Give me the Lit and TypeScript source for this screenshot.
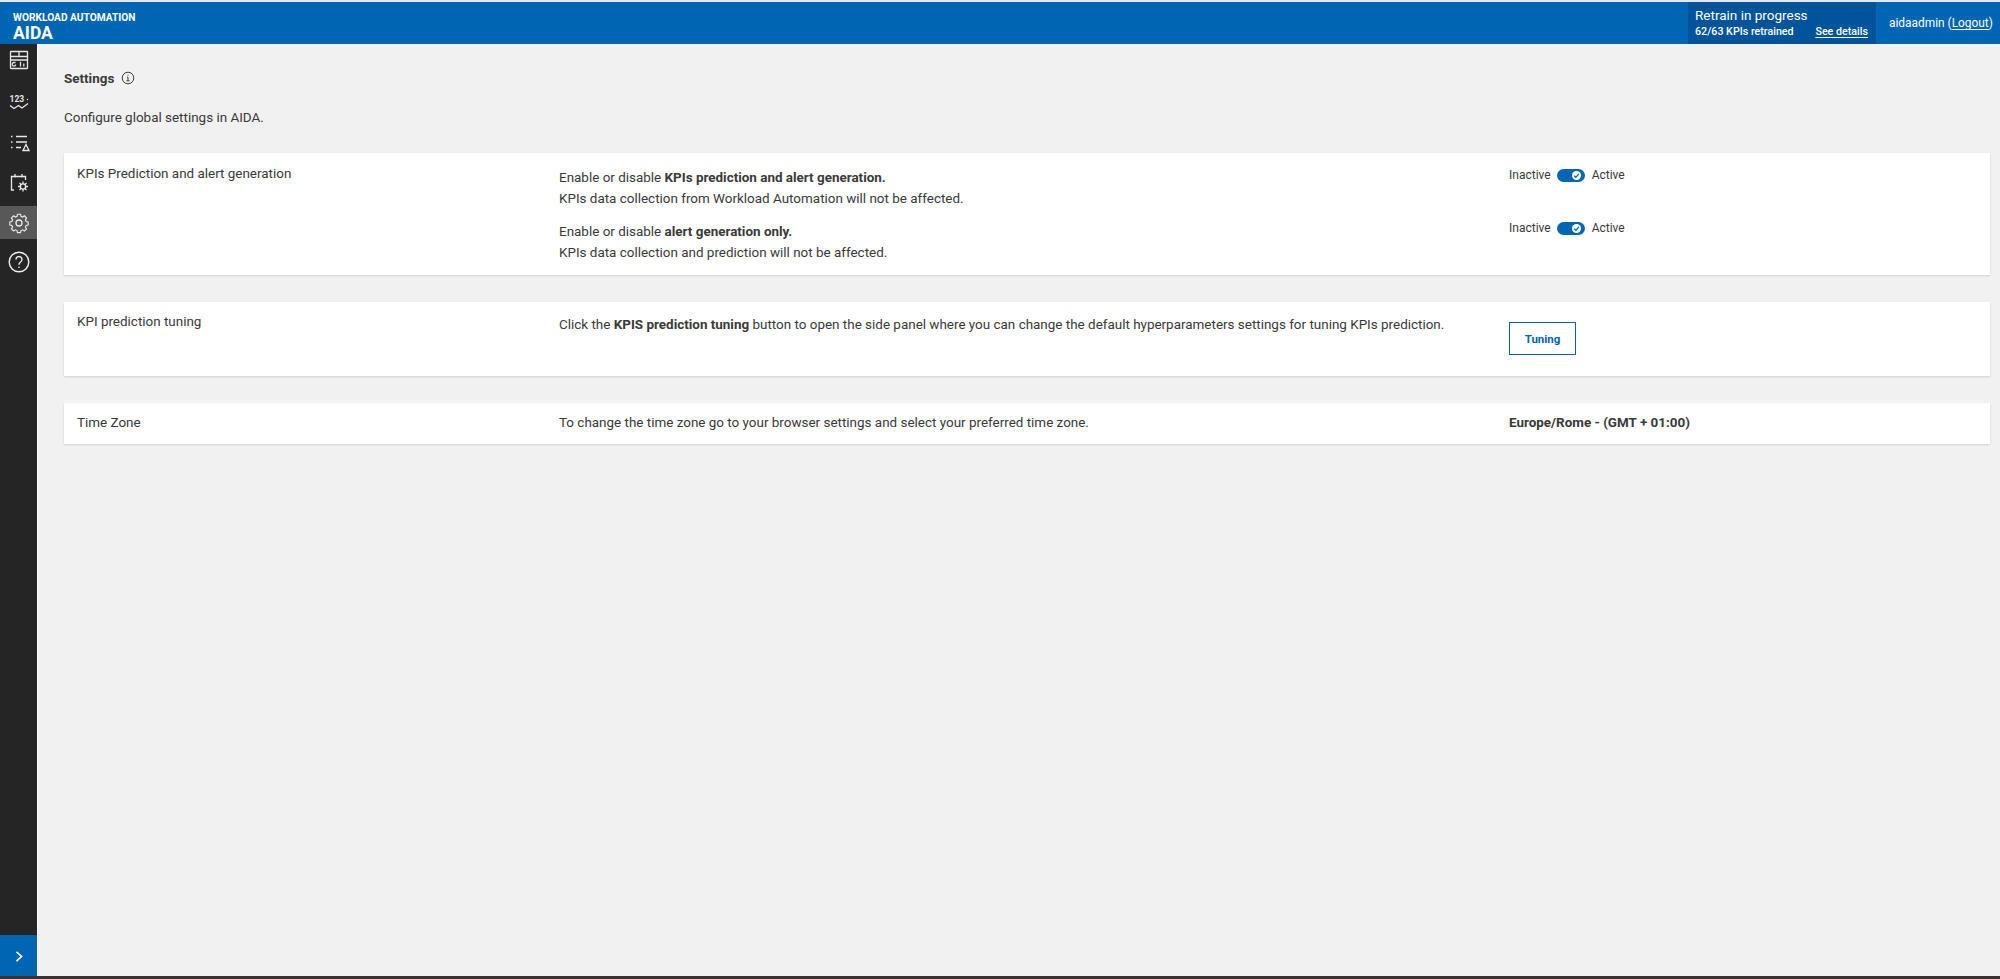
import { LitElement, html, css, svg } from "lit";
import { customElement } from "lit/decorators.js";

const toggle = html`<span class="toggle"><span class="knob"><svg viewBox="0 0 10 10" width="9" height="9"><path d="M2.400 5.200 4.300 7 7.600 3.200" fill="none" stroke="#0065b3" stroke-width="1.400"/></svg></span></span>`;

const icon = (body: unknown) => html`<svg class="ico" viewBox="0 0 24 24" width="24" height="24" fill="none" stroke="#e8e8e8" stroke-width="1.300">${body}</svg>`;

@customElement("app-root")
export class AppRoot extends LitElement {
  static styles = css`
    :host { display: flex; flex-direction: column; width: 2000px; height: 979px; overflow: hidden; background: #f1f1f1; font-family: Roboto, "Liberation Sans", sans-serif; font-size: 13.44px; color: #3a3a3a; }
    .topline { height: 2px; background: #e4e8ec; flex: none; }
    header { height: 42px; flex: none; background: #0065b3; color: #fff; display: flex; align-items: stretch; justify-content: space-between; }
    .brand { padding: 10px 0 0 13px; display: flex; flex-direction: column; }
    .brand small { font-size: 10.200px; font-weight: 700; line-height: 11px; }
    .brand b { font-size: 17.500px; font-weight: 700; line-height: 20px; color: #fff; }
    .right { display: flex; align-items: stretch; }
    .retrain { width: 188px; box-sizing: border-box; background: #00549a; padding: 4px 8px 0 7px; }
    .retrain .t { font-size: 13.500px; line-height: 18px; }
    .retrain .s { display: flex; justify-content: space-between; font-size: 10.700px; font-weight: 500; line-height: 14px; margin-top: 1px; }
    .retrain a { text-decoration: underline; text-underline-offset: 2px; }
    .user { width: 124px; box-sizing: border-box; padding-left: 13px; display: flex; align-items: center; font-size: 11.900px; white-space: pre; }
    .user u { text-underline-offset: 2px; }
    .body { flex: 1; display: flex; min-height: 0; }
    nav { width: 37px; flex: none; background: #252525; border-right: 1px solid #fff; display: flex; flex-direction: column; height: 933px; }
    .ni { display: flex; align-items: center; justify-content: center; flex: none; height: 40px; }
    .n1 { height: 32px; }
    .n2 { margin-top: 8px; }
    .n3 { height: 38px; }
    .n5 { margin-top: 4px; height: 33px; background: #585858; }
    .n6 { height: 46px; }
    .spacer { flex: 1; }
    .expand { height: 42px; background: #0065b3; display: flex; align-items: center; justify-content: center; }
    main { flex: 1; padding: 26px 10px 0 26px; min-width: 0; }
    .title { display: flex; align-items: center; gap: 7px; font-weight: 700; line-height: 18px; }
    .title svg { position: relative; top: -1px; }
    .sub { margin-top: 20px; line-height: 20px; }
    .card { background: #fff; box-shadow: 0 1px 2px rgba(0,0,0,.14); display: grid; grid-template-columns: 482px 950px 1fr; padding-left: 13px; margin-bottom: 27px; }
    .card.first { margin-top: 25px; height: 122px; }
    .cell { line-height: 22px; }
    .label { padding-top: 10px; }
    .desc { padding-top: 14px; line-height: 21px; }
    .p + .p { margin-top: 12px; }
    .ctl { padding-top: 11px; }
    b { font-weight: 700; }
    .switch { display: flex; align-items: center; gap: 6px; font-size: 12px; height: 22px; }
    .switch + .switch { margin-top: 31px; }
    .toggle { width: 28px; height: 13px; border-radius: 7px; background: #0065b3; position: relative; display: block; margin-right: 1px; }
    .knob { position: absolute; right: 4px; top: 2px; width: 9px; height: 9px; border-radius: 50%; background: #fff; display: flex; align-items: center; justify-content: center; }
    button { display: block; width: 67px; height: 33px; box-sizing: border-box; border: 1.500px solid #0065b3; background: #fff; color: #0065b3; font: 700 11.500px Roboto, sans-serif; padding: 0; }
    .c2 { height: 74px; }
    .c2 .label { padding-top: 9px; }
    .c2 .desc { padding-top: 12px; }
    .c2 .ctl { padding-top: 20px; }
    .c3 { height: 41px; }
    .c3 .cell { padding-top: 9px; }
    .foot { height: 3px; background: #3a3230; flex: none; }
    .ico { display: block; }
  `;

  render() {
    return html`
      <div class="topline"></div>
      <header>
        <div class="brand"><small>WORKLOAD AUTOMATION</small><b>AIDA</b></div>
        <div class="right">
          <div class="retrain"><div class="t">Retrain in progress</div><div class="s"><span>62/63 KPIs retrained</span><a>See details</a></div></div>
          <div class="user">aidaadmin (<u>Logout</u>)</div>
        </div>
      </header>
      <div class="body">
        <nav>
          <div class="ni n1">${icon(svg`<rect x="3.500" y="3.500" width="17" height="17" rx=".5"/><path d="M3.500 8.500h17M3.500 12h17M12 3.500V8.500"/><path d="M8.500 14.500H6.800a1.800 1.800 0 1 0 1.900 2M13.500 13.800v4.700M16.800 15.500v3"/>`)}</div>
          <div class="ni n2"><svg class="ico" viewBox="0 0 24 24" width="24" height="24" fill="none" stroke="#e8e8e8" stroke-width="1.300"><text x="2.500" y="10" font-family="Roboto" font-size="8.500" font-weight="700" fill="#e8e8e8" stroke="none">123</text><circle cx="20.500" cy="7.500" r=".7" fill="#e8e8e8" stroke="none"/><path d="M3 13.500l4 3 4.500-3 3.500 2.500 6-4.500"/></svg></div>
          <div class="ni n3">${icon(svg`<path d="M4 5.500h1.500M4 11h1.500M4 16.500h1.500M9 5.500h11M9 11h11M9 16.500h5"/><path d="M19 13.500l3 6h-6z"/>`)}</div>
          <div class="ni n4">${icon(svg`<path d="M7 20H4.500V6.500h14V10M8 4v3.500M15 4v3.500"/><circle cx="16" cy="16.500" r="2.600"/><path d="M16 11.500v2.400M16 19.100v2.400M11 16.500h2.400M18.600 16.500H21M12.500 13l1.700 1.700M17.800 18.300l1.700 1.700M12.500 20l1.700-1.700M17.800 14.700l1.700-1.700"/>`)}</div>
          <div class="ni n5">${icon(svg`<circle cx="12" cy="12" r="3"/><path d="M10.300 3.500h3.400l.5 2.300 1.800.8 2-1.300 2.400 2.400-1.300 2 .8 1.800 2.300.5v0 3.400l-2.300.5-.8 1.800 1.300 2-2.400 2.400-2-1.300-1.800.8-.5 2.300h-3.400l-.5-2.300-1.800-.8-2 1.300-2.400-2.400 1.300-2-.8-1.800-2.300-.5v-3.400l2.300-.5.8-1.800-1.300-2 2.400-2.400 2 1.300 1.800-.8z" transform="translate(1.200 .1) scale(.9)"/>`)}</div>
          <div class="ni n6"><svg class="ico" viewBox="0 0 24 24" width="24" height="24" fill="none" stroke="#f0f0f0" stroke-width="1.400"><circle cx="12" cy="12" r="9.800"/><path d="M9 9.500a3 3 0 1 1 4.600 2.500c-1 .7-1.600 1.300-1.600 2.700"/><circle cx="12" cy="17.300" r=".8" fill="#f0f0f0" stroke="none"/></svg></div>
          <div class="spacer"></div>
          <div class="expand"><svg viewBox="0 0 12 14" width="10" height="13" fill="none" stroke="#fff" stroke-width="2"><path d="M3 1.500 9 7l-6 5.500"/></svg></div>
        </nav>
        <main>
          <div class="title">Settings <svg viewBox="0 0 14 14" width="14" height="14" fill="none" stroke="#3a3a3a" stroke-width="1"><circle cx="7" cy="7" r="5.800"/><path d="M7 6.300v3.500M5.500 9.800h3M6 6.300h1M7 3.800v1"/></svg></div>
          <div class="sub">Configure global settings in AIDA.</div>
          <section class="card first">
            <div class="cell label">KPIs Prediction and alert generation</div>
            <div class="cell desc">
              <div class="p">Enable or disable <b>KPIs prediction and alert generation.</b><br />KPIs data collection from Workload Automation will not be affected.</div>
              <div class="p">Enable or disable <b>alert generation only.</b><br />KPIs data collection and prediction will not be affected.</div>
            </div>
            <div class="cell ctl">
              <div class="switch">Inactive ${toggle} Active</div>
              <div class="switch">Inactive ${toggle} Active</div>
            </div>
          </section>
          <section class="card c2">
            <div class="cell label">KPI prediction tuning</div>
            <div class="cell desc">Click the <b>KPIS prediction tuning</b> button to open the side panel where you can change the default hyperparameters settings for tuning KPIs prediction.</div>
            <div class="cell ctl"><button>Tuning</button></div>
          </section>
          <section class="card c3">
            <div class="cell">Time Zone</div>
            <div class="cell">To change the time zone go to your browser settings and select your preferred time zone.</div>
            <div class="cell"><b>Europe/Rome - (GMT + 01:00)</b></div>
          </section>
        </main>
      </div>
      <div class="foot"></div>
    `;
  }
}
